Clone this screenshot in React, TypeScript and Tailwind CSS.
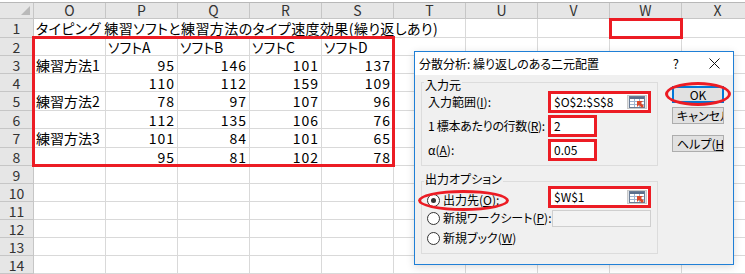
import React from 'react';

const jp = "font-[family-name:'Noto_Sans_CJK_JP','Noto_Sans_CJK_SC',sans-serif] [font-feature-settings:'palt']";

const columns = ['O', 'P', 'Q', 'R', 'S', 'T', 'U', 'V', 'W', 'X'];

type Row = { n: number; h: string; label?: string; values?: (string | number)[] };

const rows: Row[] = [
  { n: 2, h: 'h-[18px]', values: ['ソフトA', 'ソフトB', 'ソフトC', 'ソフトD'] },
  { n: 3, h: 'h-[18px]', label: '練習方法1', values: [95, 146, 101, 137] },
  { n: 4, h: 'h-[18px]', values: [110, 112, 159, 109] },
  { n: 5, h: 'h-[19px]', label: '練習方法2', values: [78, 97, 107, 96] },
  { n: 6, h: 'h-[18px]', values: [112, 135, 106, 76] },
  { n: 7, h: 'h-[19px]', label: '練習方法3', values: [101, 84, 101, 65] },
  { n: 8, h: 'h-[18px]', values: [95, 81, 102, 78] },
  { n: 9, h: 'h-[18px]' },
  { n: 10, h: 'h-[18px]' },
  { n: 11, h: 'h-[18px]' },
  { n: 12, h: 'h-[18px]' },
  { n: 13, h: 'h-[18px]' },
  { n: 14, h: 'h-[18px]' },
];

const RowHead = ({ n, h }: { n: number; h: string }) => (
  <div className={`w-[34px] shrink-0 ${h} bg-[#e6e6e6] border-r border-b border-[#c6c6c6] flex items-center justify-center text-[14px] leading-[16px] text-[#333]`}>
    {n}
  </div>
);

const Cell = ({ h, children, right }: { h: string; children?: React.ReactNode; right?: boolean }) => (
  <div
    className={`w-[72px] shrink-0 ${h} border-r border-b border-[#d9d9d9] flex items-center text-[14px] leading-[16px] whitespace-nowrap overflow-hidden ${
      right ? 'justify-end pr-[2px] tracking-[1px]' : 'pl-[2px]'
    }`}
  >
    {children}
  </div>
);

const RefIcon = () => (
  <svg width="16" height="12" viewBox="0 0 16 12">
    <rect x="0.5" y="0.5" width="15" height="11" fill="#fff" stroke="#6a7c95" />
    <rect x="1" y="1" width="14" height="2" fill="#5b6f8c" />
    <path d="M1 5.5h14M1 8.5h14M5.5 3v8M10.5 3v8" stroke="#9fb4d0" />
    <path d="M8 5l6 0-2 2 3 3-2 2-3-3-2 2z" fill="#d9472b" />
  </svg>
);

const Radio = ({ on }: { on?: boolean }) => (
  <div className="w-[13px] h-[13px] rounded-full border border-[#333] bg-white flex items-center justify-center shrink-0">
    {on && <div className="w-[5px] h-[5px] rounded-full bg-[#333]" />}
  </div>
);

const RedField = ({ w, value, ref: withRef }: { w: string; value: string; ref?: boolean }) => (
  <div className={`${w} shrink-0 h-[22px] border-[3px] border-[#ec1c24] bg-white flex items-center pl-[3px] text-[12px] leading-[14px]`}>
    <span>{value}</span>
    {withRef && (
      <div className="ml-auto mr-[1px] w-[20px] h-[14px] bg-[#dfe3e8] border border-[#c9c9c9] flex items-center justify-center">
        <RefIcon />
      </div>
    )}
  </div>
);

const Btn = ({ children, primary }: { children: React.ReactNode; primary?: boolean }) => (
  <div
    className={`w-[52px] h-[17px] bg-[#e1e1e1] flex items-center overflow-hidden whitespace-nowrap text-[12px] leading-[14px] ${
      primary ? 'border-2 border-[#0078d7] justify-center' : 'border border-[#adadad] pl-[4px]'
    }`}
  >
    {children}
  </div>
);

const Dialog = () => (
  <div className="absolute left-[414px] top-[51px] w-[320px] h-[214px] border border-[#1f7fd6] flex flex-col shadow-[0_2px_8px_rgba(0,0,0,0.15)]">
    {/* Title bar */}
    <div className="h-[23px] bg-white flex items-center pl-[4px] text-[12px] leading-[14px] text-black">
      <span className="whitespace-nowrap">分散分析: 繰り返しのある二元配置</span>
      <span className="ml-auto mr-[30px] text-[13px]">?</span>
      <svg width="11" height="11" viewBox="0 0 11 11" className="mr-[13px]">
        <path d="M0.5 0.5l10 10M10.5 0.5l-10 10" stroke="#111" strokeWidth="1" />
      </svg>
    </div>
    {/* Body */}
    <div className="flex-1 bg-[#f0f0f0] flex pl-[6px] text-[12px] leading-[14px] text-black whitespace-nowrap">
      <div className="w-[237px] flex flex-col">
        <span className="relative w-fit ml-[3px] mt-[2px] mb-[-11px] px-[1px] leading-[16px] bg-[#f0f0f0]">入力元</span>
        <div className="h-[84px] border border-[#dcdcdc] pt-[8px] pl-[6px] flex flex-col gap-[2px]">
          <div className="flex items-center h-[22px]">
            <span className="w-[120px] shrink-0">
              入力範囲(<span className="underline">I</span>):
            </span>
            <RedField w="w-[103px]" value="$O$2:$S$8" ref />
          </div>
          <div className="flex items-center h-[22px]">
            <span className="w-[120px] shrink-0 tracking-[-0.3px]">
              1 標本あたりの行数(<span className="underline">R</span>):
            </span>
            <RedField w="w-[49px]" value="2" />
          </div>
          <div className="flex items-center h-[22px]">
            <span className="w-[120px] shrink-0">
              α(<span className="underline">A</span>):
            </span>
            <RedField w="w-[49px]" value="0.05" />
          </div>
        </div>
        <span className="relative w-fit ml-[3px] mt-[5px] mb-[-6px] px-[1px] leading-[16px] bg-[#f0f0f0]">出力オプション</span>
        <div className="h-[73px] border border-[#dcdcdc] pl-[5px] pt-[4px] flex flex-col">
          <div className="flex items-end h-[22px]">
            <div className="w-[121px] shrink-0 h-[16px] flex items-center gap-[3px]">
              <Radio on />
              <span>
                出力先(<span className="underline">O</span>):
              </span>
            </div>
            <RedField w="w-[103px]" value="$W$1" ref />
          </div>
          <div className="flex items-center h-[20px]">
            <div className="w-[125px] shrink-0 flex items-center gap-[3px]">
              <Radio />
              <span>
                新規ワークシート(<span className="underline">P</span>):
              </span>
            </div>
            <div className="w-[99px] h-[17px] bg-[#f3f3f3] border border-[#cfcfcf]" />
          </div>
          <div className="flex items-center h-[20px] gap-[3px]">
            <Radio />
            <span>
              新規ブック(<span className="underline">W</span>)
            </span>
          </div>
        </div>
      </div>
      <div className="ml-[14px] mt-[11px] flex flex-col">
        <Btn primary>OK</Btn>
        <div className="h-[4px]" />
        <Btn>キャンセル</Btn>
        <div className="h-[11px]" />
        <Btn>
          ヘルプ(<span className="underline">H</span>)
        </Btn>
      </div>
    </div>
  </div>
);

export default function App() {
  return (
    <div className={`relative w-[745px] h-[274px] overflow-hidden bg-white text-black ${jp}`}>
      {/* top strip */}
      <div className="h-[3px] border-b border-[#b8b8b8]" />
      {/* column headers */}
      <div className="flex h-[16px]">
        <div className="w-[34px] shrink-0 bg-[#e6e6e6] border-r border-b border-[#c6c6c6] flex items-end justify-end p-[3px]">
          <div className="w-0 h-0 border-l-[9px] border-l-transparent border-b-[9px] border-b-[#b9b9b9]" />
        </div>
        {columns.map((c) => (
          <div
            key={c}
            className="w-[72px] shrink-0 bg-[#e6e6e6] border-r border-b border-[#c6c6c6] flex items-center justify-center text-[14px] leading-[15px] text-[#333]"
          >
            {c}
          </div>
        ))}
      </div>
      {/* row 1 */}
      <div className="flex">
        <RowHead n={1} h="h-[19px]" />
        <div className="w-[432px] shrink-0 h-[19px] border-r border-b border-[#d9d9d9] flex items-center pl-[2px] text-[14px] leading-[16px] whitespace-nowrap tracking-[0.4px]">
          タイピング 練習ソフトと練習方法のタイプ速度効果(繰り返しあり)
        </div>
        {['U', 'V', 'W', 'X'].map((c) => (
          <Cell key={c} h="h-[19px]" />
        ))}
      </div>
      {rows.map((r) => (
        <div key={r.n} className="flex">
          <RowHead n={r.n} h={r.h} />
          <Cell h={r.h}>{r.label}</Cell>
          {columns.slice(1).map((c, i) => {
            const v = r.values?.[i];
            return (
              <Cell key={c} h={r.h} right={typeof v === 'number'}>
                {v}
              </Cell>
            );
          })}
        </div>
      ))}

      {/* red annotations */}
      <div className="absolute left-[32px] top-[36px] w-[363px] h-[131px] border-[3px] border-[#ec1c24]" />
      <div className="absolute left-[609px] top-[18px] w-[74px] h-[21px] border-[3px] border-[#ec1c24]" />

      <Dialog />

      <div className="absolute left-[665px] top-[82px] w-[66px] h-[24px] border-[3px] border-[#ec1c24] rounded-[50%]" />
      <div className="absolute left-[418px] top-[190px] w-[91px] h-[21px] border-[3px] border-[#ec1c24] rounded-[50%]" />
    </div>
  );
}
